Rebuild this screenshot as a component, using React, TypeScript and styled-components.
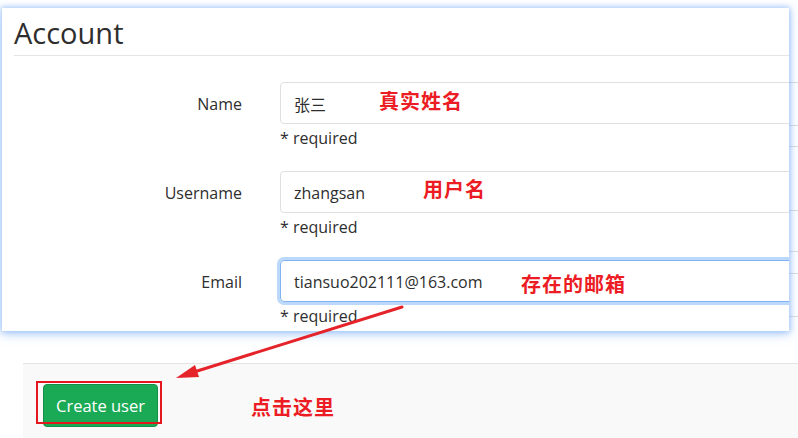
import React from "react";
import styled, { createGlobalStyle } from "styled-components";

const Global = createGlobalStyle`
  html, body { margin: 0; padding: 0; background: #ffffff; }
  body { font-family: "Open Sans", "Noto Sans", Arial, sans-serif; color: #2e2e2e; }
`;

const Canvas = styled.div`
  position: relative;
  width: 798px;
  height: 438px;
  overflow: hidden;
  background: #ffffff;
`;

const BasePage = styled.div`
  display: flex;
  flex-direction: column;
  width: 100%;
  height: 100%;
`;

const GhostArea = styled.div`
  height: 363px;
  display: flex;
  flex-direction: column;
  flex-shrink: 0;
`;

const GhostLine = styled.div<{ $gap: number }>`
  margin-top: ${(p) => p.$gap - 1}px;
  height: 1px;
  background: #dcdcdc;
  margin-left: 280px;
`;

const Footer = styled.div`
  flex: 1;
  margin-left: 23px;
  background: #f9f9f9;
  border-top: 1px solid #e3e3e3;
  display: flex;
  align-items: flex-start;
  padding: 20px 0 0 20px;
`;

const SubmitButton = styled.button`
  width: 115px;
  height: 43px;
  background: #1aaa55;
  border: 1px solid #168f48;
  border-radius: 4px;
  color: #ffffff;
  font-family: "Open Sans", "Noto Sans", Arial, sans-serif;
  font-size: 16.5px;
  padding: 0;
  cursor: pointer;
`;

const Panel = styled.div`
  position: absolute;
  left: 2px;
  top: 8px;
  width: 787px;
  height: 323px;
  background: #ffffff;
  overflow: hidden;
  box-shadow: 0 0 6px 1px rgba(110, 165, 245, 0.6), 0 4px 10px rgba(110, 165, 245, 0.35);
  padding-left: 12px;
  box-sizing: border-box;
`;

const Heading = styled.h3`
  margin: 0;
  padding-top: 6px;
  height: 41px;
  border-bottom: 1px solid #e5e5e5;
  font-size: 29px;
  font-weight: 400;
  line-height: 38px;
  color: #2e2e2e;
`;

const Form = styled.div`
  display: flex;
  flex-direction: column;
  gap: 21px;
  padding-top: 26px;
`;

const Row = styled.div`
  display: grid;
  grid-template-columns: 228px 640px;
  column-gap: 38px;
`;

const Label = styled.div`
  text-align: right;
  font-size: 16px;
  line-height: 42px;
  padding-top: 1px;
  color: #2e2e2e;
`;

const FieldCol = styled.div`
  display: flex;
  flex-direction: column;
`;

const Field = styled.div<{ $focus?: boolean }>`
  height: 42px;
  box-sizing: border-box;
  border: 1px solid ${(p) => (p.$focus ? "#7fb4f0" : "#dfdfdf")};
  border-radius: 4px;
  padding: 2px 0 0 13px;
  display: flex;
  align-items: center;
  font-size: 16px;
  color: #2e2e2e;
  box-shadow: ${(p) => (p.$focus ? "0 0 0 3px #bcd8fa" : "none")};
  font-family: "Open Sans", "Noto Sans CJK SC", sans-serif;
`;

const Help = styled.div`
  margin-top: 2px;
  font-size: 16px;
  line-height: 24px;
  color: #2e2e2e;
`;

const Note = styled.span<{ $x: number; $y: number }>`
  position: absolute;
  left: ${(p) => p.$x}px;
  top: ${(p) => p.$y}px;
  font-family: "Noto Sans CJK SC", sans-serif;
  font-size: 20px;
  line-height: 24px;
  font-weight: 700;
  color: #ec1c24;
  letter-spacing: 1px;
  white-space: nowrap;
`;

const Highlight = styled.div`
  position: absolute;
  left: 36px;
  top: 381px;
  width: 126px;
  height: 43px;
  box-sizing: border-box;
  border: 2px solid #e3171e;
`;

const ArrowSvg = styled.svg`
  position: absolute;
  left: 0;
  top: 0;
  pointer-events: none;
`;

const ghostGaps = [83, 43, 21, 64, 41, 22, 43];

const fields = [
  { label: "Name", value: "张三" },
  { label: "Username", value: "zhangsan" },
  { label: "Email", value: "tiansuo202111@163.com", focus: true },
];

export default function App() {
  return (
    <Canvas>
      <Global />
      <BasePage>
        <GhostArea>
          {ghostGaps.map((g, i) => (
            <GhostLine key={i} $gap={g} />
          ))}
        </GhostArea>
        <Footer>
          <SubmitButton>Create user</SubmitButton>
        </Footer>
      </BasePage>

      <Panel>
        <Heading>Account</Heading>
        <Form>
          {fields.map((f) => (
            <Row key={f.label}>
              <Label>{f.label}</Label>
              <FieldCol>
                <Field $focus={f.focus}>{f.value}</Field>
                <Help>* required</Help>
              </FieldCol>
            </Row>
          ))}
        </Form>
      </Panel>

      <Note $x={379} $y={89}>真实姓名</Note>
      <Note $x={423} $y={177}>用户名</Note>
      <Note $x={521} $y={272}>存在的邮箱</Note>
      <Note $x={251} $y={395}>点击这里</Note>

      <Highlight />

      <ArrowSvg width="798" height="438" viewBox="0 0 798 438">
        <line x1="402" y1="307" x2="194" y2="372" stroke="#e5232a" strokeWidth="3" strokeLinecap="round" />
        <polygon points="176,378 199,377 195,365" fill="#e5232a" />
      </ArrowSvg>
    </Canvas>
  );
}
